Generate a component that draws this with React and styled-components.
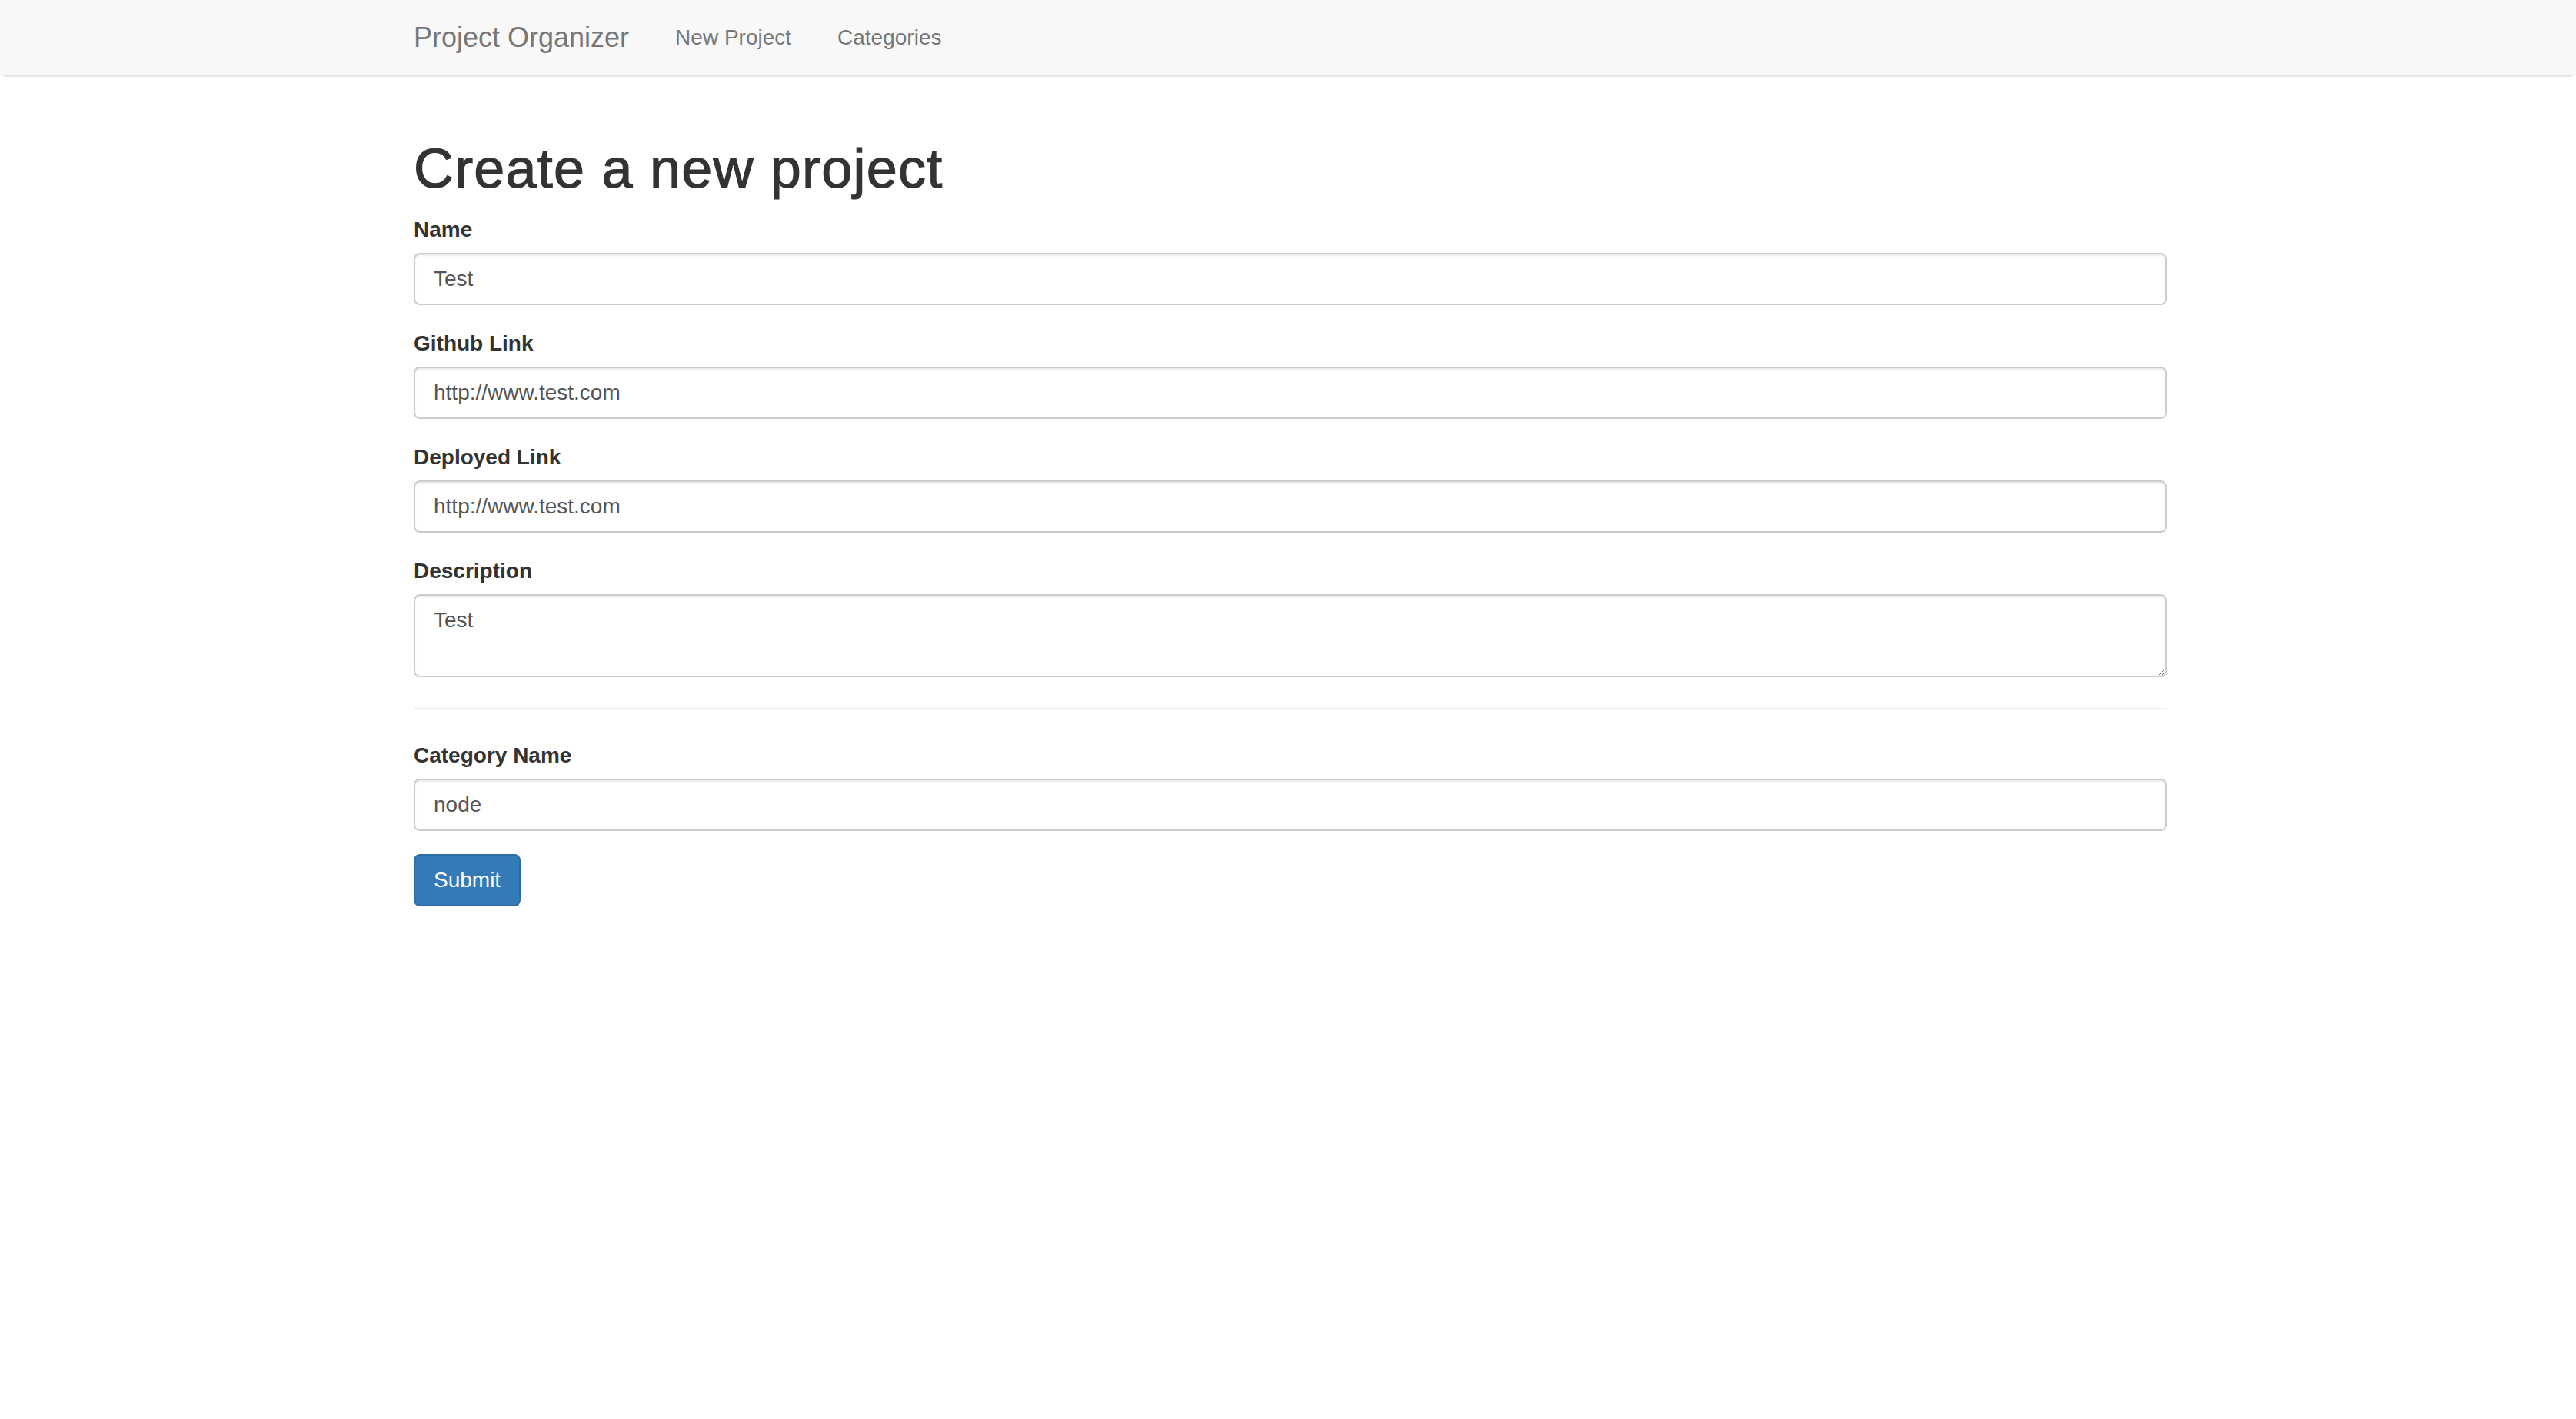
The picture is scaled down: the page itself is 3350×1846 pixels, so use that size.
import styled, { createGlobalStyle } from "styled-components";

const GlobalStyle = createGlobalStyle`
    *, *:before, *:after {
        box-sizing: border-box;
    }
    html, body {
        margin: 0;
        padding: 0;
        background: #fff;
    }
    body {
        font-family: "Liberation Sans", Arial, Helvetica, sans-serif;
        font-size: 28px;
        line-height: 1.42857;
        color: #333;
    }
`

const fields = [
    { label: 'Name', value: 'Test' },
    { label: 'Github Link', value: 'http://www.test.com' },
    { label: 'Deployed Link', value: 'http://www.test.com' },
]

const App = () => {
    return (
        <>
            <GlobalStyle />
            <Navbar>
                <Container>
                    <NavInner>
                        <Brand href="#">Project Organizer</Brand>
                        <NavList>
                            <li><NavLink href="#">New Project</NavLink></li>
                            <li><NavLink href="#">Categories</NavLink></li>
                        </NavList>
                    </NavInner>
                </Container>
            </Navbar>
            <Container>
                <Title>Create a new project</Title>
                <form onSubmit={e => e.preventDefault()}>
                    {fields.map(f => (
                        <FormGroup key={f.label}>
                            <Label>{f.label}</Label>
                            <Input type="text" defaultValue={f.value} />
                        </FormGroup>
                    ))}
                    <FormGroup>
                        <Label>Description</Label>
                        <TextArea rows={2} defaultValue="Test" />
                    </FormGroup>
                    <Divider />
                    <FormGroup>
                        <Label>Category Name</Label>
                        <Input type="text" defaultValue="node" />
                    </FormGroup>
                    <SubmitButton type="submit">Submit</SubmitButton>
                </form>
            </Container>
        </>
    );
}

const Navbar = styled.nav`
    background: #f8f8f8;
    border-bottom: 2px solid #e7e7e7;
    border-radius: 0 0 8px 8px;
    min-height: 100px;
    margin-bottom: 40px;
`
const Container = styled.div`
    display: flow-root;
    width: 2280px;
    /* reference sits a few px right of true centre */
    margin: 0 calc(50% - 1143px) 0 calc(50% - 1137px);
`
const NavInner = styled.div`
    display: flex;
    align-items: center;
    height: 98px;
`
const Brand = styled.a`
    padding: 30px 30px 30px 0;
    font-size: 36px;
    line-height: 40px;
    color: #777;
    text-decoration: none;
`
const NavList = styled.ul`
    display: flex;
    list-style: none;
    margin: 0;
    padding: 0;
`
const NavLink = styled.a`
    display: block;
    padding: 30px;
    line-height: 40px;
    font-size: 28px;
    color: #777;
    text-decoration: none;
`
const Title = styled.h1`
    font-size: 72px;
    font-weight: 500;
    line-height: 1.1;
    letter-spacing: 1.2px;
    -webkit-text-stroke: 1.2px #333;
    margin: 40px 0 20px;
    color: #333;
`
const FormGroup = styled.div`
    margin-bottom: 30px;
`
const Label = styled.label`
    display: inline-block;
    margin-bottom: 10px;
    font-weight: 700;
    line-height: 40px;
`
const fieldStyles = `
    display: block;
    width: 100%;
    padding: 12px 24px;
    font-family: "Liberation Sans", Arial, Helvetica, sans-serif;
    font-size: 28px;
    line-height: 40px;
    color: #555;
    background: #fff;
    border: 2px solid #ccc;
    border-radius: 8px;
    box-shadow: inset 0 2px 2px rgba(0,0,0,.075);
    outline: none;
`
const Input = styled.input`
    ${fieldStyles}
    height: 68px;
`
const TextArea = styled.textarea`
    ${fieldStyles}
    height: auto;
    resize: vertical;
`
const Divider = styled.hr`
    margin: 40px 0;
    border: 0;
    border-top: 2px solid #eee;
`
const SubmitButton = styled.button`
    display: inline-block;
    padding: 12px 24px;
    font-family: "Liberation Sans", Arial, Helvetica, sans-serif;
    font-size: 28px;
    line-height: 40px;
    color: #fff;
    background: #337ab7;
    border: 2px solid #2e6da4;
    border-radius: 8px;
    cursor: pointer;
`

export default App;
